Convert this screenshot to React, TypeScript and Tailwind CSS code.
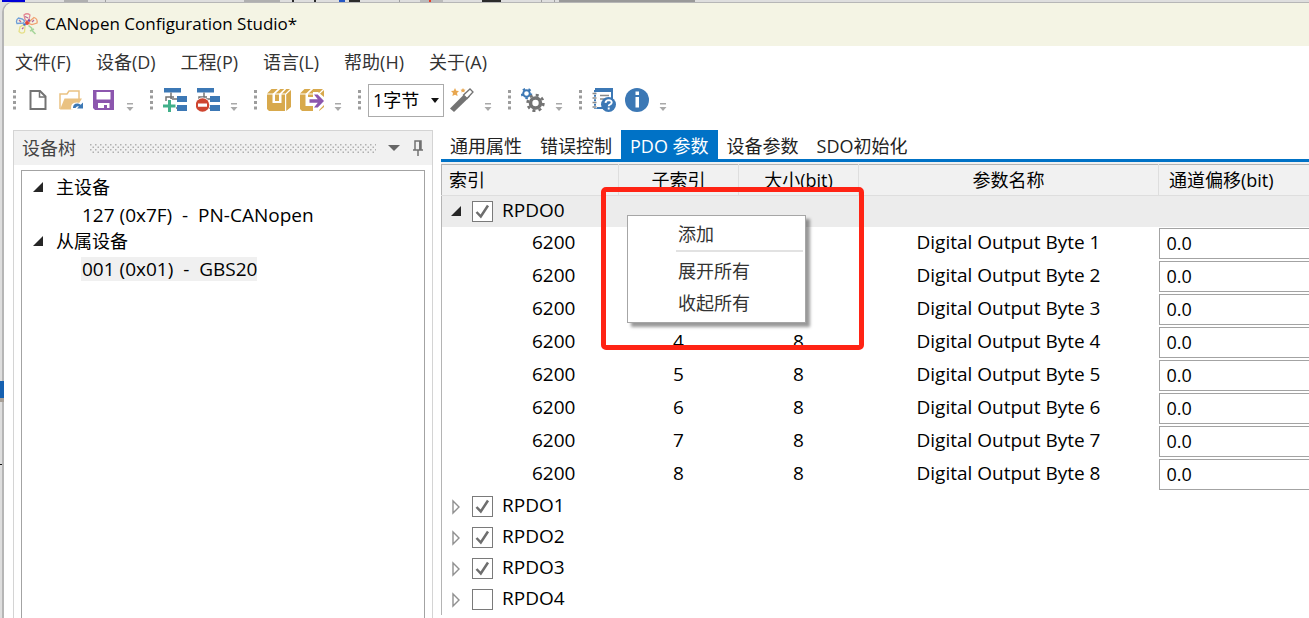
import { ReactNode, useState } from "react";

const menus = ["文件(F)", "设备(D)", "工程(P)", "语言(L)", "帮助(H)", "关于(A)"];

const tabs = ["通用属性", "错误控制", "PDO 参数", "设备参数", "SDO初始化"];

const mappings = [1, 2, 3, 4, 5, 6, 7, 8].map((n) => ({
    index: "6200",
    sub: n,
    size: 8,
    name: `Digital Output Byte ${n}`,
    offset: "0.0",
}));

const collapsedPdos = [
    { name: "RPDO1", enabled: true },
    { name: "RPDO2", enabled: true },
    { name: "RPDO3", enabled: true },
    { name: "RPDO4", enabled: false },
];

/* ---------- icons ---------- */

const AppLogo = () => (
    <svg className="w-6 h-6" viewBox="0 0 24 24" fill="none" strokeWidth="1.3">
        <path d="M10 7.500 9 3q3-2.500 6 0l-1 4.500-2 2z" stroke="#e58a94" />
        <path d="M8.500 11 2 11.500Q.5 8 3.500 6l4 1 2 2z" stroke="#6f9fd8" />
        <path d="M15 9l4-3.500q4 1.500 3 5.500l-5 1.500-3-1z" stroke="#f0a070" />
        <path d="M10 14.500 9.500 20q-3 2.500-5.500-.5L5 15l3-2z" stroke="#e6e08a" />
        <path d="M13.500 13.500l3 2.500 1 3 3 3M15 19l4-2" stroke="#a8d69c" strokeWidth="1.600" />
        <path d="M4 8l2 2M10 4.500l3 1.500M19 8l-2 2M7 17l1.500-1.500" stroke="#b5679a" />
        <circle cx="12" cy="11" r="2" fill="#e0453a" />
        <circle cx="9.500" cy="12.500" r="1.300" fill="#4775c9" />
        <circle cx="14" cy="8.500" r="1.200" fill="#7a4fb0" />
    </svg>
);

const NewIcon = () => (
    <svg className="w-6 h-6" viewBox="0 0 24 24" fill="none" stroke="#737373" strokeWidth="2">
        <path d="M4.500 3H14l5.500 5.500V21h-15z" />
        <path d="M13.500 3v6h6" strokeWidth="1.500" />
    </svg>
);

const OpenIcon = () => (
    <svg className="w-6 h-6" viewBox="0 0 24 24">
        <path d="M1 21V6h7l2-3h10v8" fill="none" stroke="#eac282" strokeWidth="1.500" />
        <path d="M1 21.500 5.500 10.500H23l-2.500 4-7 7z" fill="#eac282" />
        <path d="M12 21.500q-1-9 9.500-6.500L24 13v9h-6l2.500-3q-3.500-1.500-4.500 2.500z" fill="#fff" />
        <path d="M14 20q0-5 5-4.500 1.500.2 2.700 1.200L24 14.500v6h-6l2-2q-2-1.200-3.500 1.500z" fill="#3c78b5" />
    </svg>
);

const SaveIcon = () => (
    <svg className="w-6 h-6" viewBox="0 0 24 24">
        <path d="M1 2h21v20H3l-2-2z" fill="#8c56ae" />
        <path d="M4.500 4h14v7.500h-14zM6 15h11.500v5H15v-3h-3v3H6z" fill="#fff" />
    </svg>
);

const TreeNodes = () => (
    <>
        <path d="M1 0h17v4.500H1zM14 8h10v6H14zM14 17h10v6H14z" fill="#3c78b5" />
        <path d="M8 4.500V9M3 13V9h8M8 9v11h6M8 11h6" fill="none" stroke="#737373" strokeWidth="1.500" />
    </>
);

const AddNodeIcon = () => (
    <svg className="w-6 h-6" viewBox="0 0 24 24">
        <TreeNodes />
        <path d="M4 11h5v4h4v6H9v3H4v-3H0v-6h4z" fill="#fff" />
        <path d="M5 12h3v4.500h4.500v3H8V24H5v-4.500H0v-3h5z" fill="#42b08a" />
    </svg>
);

const RemoveNodeIcon = () => (
    <svg className="w-6 h-6" viewBox="0 0 24 24">
        <TreeNodes />
        <circle cx="6.500" cy="17" r="7.500" fill="#fff" />
        <circle cx="6.500" cy="17" r="6.800" fill="#cf4530" />
        <path d="M2 15.500h9v3.200H2z" fill="#fff" />
    </svg>
);

const BoxShape = () => (
    <>
        <path d="M4.500 1H23l-4.500 4.500H0z" fill="#d8a94c" />
        <path d="M0 6.500h18V23H2l-2-2zM19.200 6.500 24 2v17l-4.800 4z" fill="#d8a94c" />
    </>
);

const BoxIcon = () => (
    <svg className="w-6 h-6" viewBox="0 0 24 24">
        <BoxShape />
        <path d="M5.500 6 11 .8h2.500L8 6v7h4V6L17.500.8h2L14.500 6v9h-9z" fill="#fff" />
    </svg>
);

const ExportIcon = () => (
    <svg className="w-6 h-6" viewBox="0 0 24 24">
        <BoxShape />
        <path d="M5.500 6 11 .8h2.500L8 6v3h5V4h5l6 5v8l-6 6h-5v-5H5.500z" fill="#fff" />
        <path d="M9.500 11.300h8.300L14 6.500h3.700L24 13l-6.300 6.500H14l3.800-4.700H9.500z" fill="#8c56ae" />
    </svg>
);

const WandIcon = () => (
    <svg className="w-6 h-6" viewBox="0 0 24 24">
        <path d="M0 20.500 16 4.500 20 8.500 4 24z" fill="#737373" />
        <path d="M13.500 7 20 1l3 3-6 6.500z" fill="#fff" stroke="#737373" strokeWidth="1.300" />
        <path d="M5 0l1.300 2.700L9 3 7 5l.6 3L5 6.700 2.400 8 3 5 1 3l2.700-.3zM13 0l.8 1.500 1.700.2-1.200 1.200.3 1.700-1.600-.8-1.600.8.3-1.700-1.200-1.200 1.700-.2z" fill="#e8a750" />
    </svg>
);

const GearsIcon = () => (
    <svg className="w-6 h-6" viewBox="0 0 24 24" fill="none">
        <circle cx="5.500" cy="5.500" r="3.300" stroke="#3c78b5" strokeWidth="2" />
        <circle cx="5.500" cy="5.500" r="4.700" stroke="#3c78b5" strokeWidth="2" strokeDasharray="2.400 3.500" />
        <circle cx="14.500" cy="15" r="8.500" fill="#fff" />
        <circle cx="14.500" cy="15" r="5" stroke="#737373" strokeWidth="3.600" />
        <circle cx="14.500" cy="15" r="7.900" stroke="#737373" strokeWidth="2.600" strokeDasharray="3 3.200" />
    </svg>
);

const HelpBookIcon = () => (
    <svg className="w-6 h-6" viewBox="0 0 24 24" fill="none">
        <path d="M3 1.500h17V11M3 2v18h8" stroke="#3c78b5" strokeWidth="2" />
        <path d="M3 0h18v4H3z" fill="#3c78b5" />
        <path d="M1 5.500h4M1 10h4M1 14.500h4M1 19h4" stroke="#fff" strokeWidth="2.500" />
        <path d="M.5 5.500h4M.5 10h4M.5 14.500h4M.5 19h4M8 7.500h9M8 11h6" stroke="#8a8a8a" strokeWidth="1.300" />
        <circle cx="16.500" cy="16.500" r="7.500" fill="#3c78b5" />
        <path d="M13.500 14.800q.3-2.700 3.200-2.700 3 .1 3 2.300 0 1.500-1.800 2.200-1.200.5-1.200 1.600M16.700 19.500v2" stroke="#fff" strokeWidth="1.900" />
    </svg>
);

const InfoIcon = () => (
    <svg className="w-6 h-6" viewBox="0 0 24 24">
        <circle cx="12" cy="12" r="12" fill="#3c78b5" />
        <path d="M10.500 3.500h3.500v3.500h-3.500zM10.500 9h3.500v10.500h-3.500z" fill="#fff" />
    </svg>
);

const Grip = () => (
    <svg className="w-[3px] h-5" viewBox="0 0 3 20" fill="#9d9d9d">
        <path d="M0 0h3v3H0zM0 5.500h3v3H0zM0 11h3v3H0zM0 16.500h3v3H0z" />
    </svg>
);

const Overflow = () => (
    <button aria-label="更多" className="w-2 h-6 pt-[14px]">
        <svg className="w-2 h-2" viewBox="0 0 8 8" fill="#a9a9a9">
            <path d="M1 0h6v1.500H1zM.5 4h7L4 8z" />
        </svg>
    </button>
);

const Expander = ({ open }: { open: boolean }) =>
    open ? (
        <svg className="w-3 h-3" viewBox="0 0 12 12">
            <path d="M11 0v10H1z" fill="#262626" />
        </svg>
    ) : (
        <svg className="w-3 h-4" viewBox="0 0 12 16">
            <path d="M3 2v12L9 8z" fill="none" stroke="#909090" strokeWidth="1.400" />
        </svg>
    );

/* ---------- pieces ---------- */

const ToolGroup = ({ icons }: { icons: { label: string; icon: ReactNode }[] }) => (
    <div className="flex items-center gap-[10px]">
        <Grip />
        <div className="flex items-center gap-[9px]">
            {icons.map((item) => (
                <button key={item.label} aria-label={item.label} className="w-6 h-6">
                    {item.icon}
                </button>
            ))}
        </div>
        <Overflow />
    </div>
);

const PdoRow = ({ name, enabled, open }: { name: string; enabled: boolean; open: boolean }) => (
    <div className="flex items-center h-[31px] pl-2">
        <button aria-label={open ? "收起" : "展开"} className="w-3 mr-[10px]">
            <Expander open={open} />
        </button>
        <label className="flex items-center gap-[9px]">
            <span className="relative w-[21px] h-[21px]">
                <input
                    type="checkbox"
                    defaultChecked={enabled}
                    className="peer block appearance-none w-[21px] h-[21px] bg-white border border-[#7a7a7a]"
                />
                <svg
                    className="hidden peer-checked:block absolute inset-0 pointer-events-none"
                    viewBox="0 0 21 21"
                    fill="none"
                    stroke="#6e6e6e"
                    strokeWidth="2.500"
                >
                    <path d="M4.500 11l4.300 4.500L16 4.500" />
                </svg>
            </span>
            <span className="pb-1">{name}</span>
        </label>
    </div>
);

const DeviceTree = () => (
    <aside className="flex flex-col w-[420px] shrink-0 border-x border-t border-[#d4d4d4]">
        <div className="flex items-center h-[34px] px-2 bg-[#f1f1f1] text-[#444]">
            <h2>设备树</h2>
            <svg className="flex-1 h-[9px] ml-[14px] mr-3">
                <defs>
                    <pattern id="dots" width="5" height="5" patternUnits="userSpaceOnUse">
                        <rect width="1.500" height="1.500" fill="#b0b0b0" />
                        <rect x="2.500" y="2.500" width="1.500" height="1.500" fill="#b0b0b0" />
                    </pattern>
                </defs>
                <rect width="100%" height="100%" fill="url(#dots)" />
            </svg>
            <button aria-label="窗口位置" className="mr-3">
                <svg className="w-3 h-[6px]" viewBox="0 0 12 6">
                    <path d="M0 0h12L6 6z" fill="#666" />
                </svg>
            </button>
            <button aria-label="自动隐藏">
                <svg className="w-3 h-4" viewBox="0 0 12 16" fill="none" stroke="#707070" strokeWidth="1.500">
                    <path d="M3 10V1h6v9M1 10h10M6 10v6M7.800 1v9" />
                </svg>
            </button>
        </div>
        <ul className="flex-1 mt-[5px] mx-[7px] pt-[3px] pl-[10px] border-x border-t border-[#a3a3a3] leading-[27px]">
            <li>
                <div className="flex items-center gap-3">
                    <Expander open />
                    主设备
                </div>
                <div className="flex items-center h-[27px] pl-[49px]">
                    <span className="pl-px text-[19px] leading-6 whitespace-pre">127 (0x7F)  -  PN-CANopen</span>
                </div>
            </li>
            <li>
                <div className="flex items-center gap-3">
                    <Expander open />
                    从属设备
                </div>
                <div className="flex items-center h-[27px] pl-[49px]">
                    <span className="pl-px bg-[#f0f0f0] text-[19px] leading-6 whitespace-pre">001 (0x01)  -  GBS20</span>
                </div>
            </li>
        </ul>
    </aside>
);

const ContextMenu = () => (
    <div
        role="menu"
        className="absolute left-[186px] top-[85px] w-[179px] pt-0.5 pb-[3px] bg-white border border-[#a6a6a6] shadow-[4px_4px_3px_rgba(0,0,0,0.4)] text-[#333]"
    >
        <button role="menuitem" className="block w-full h-8 pl-[50px] text-left">
            添加
        </button>
        <div className="h-0.5 ml-12 mr-0.5 mb-[3px] bg-[#e2e2e2]" />
        <button role="menuitem" className="block w-full h-8 pl-[50px] text-left">
            展开所有
        </button>
        <button role="menuitem" className="block w-full h-8 pl-[50px] text-left">
            收起所有
        </button>
    </div>
);

const PdoTable = () => (
    <table className="w-full table-fixed border-collapse border-t border-l border-[#b4b4b4]">
        <colgroup>
            <col className="w-[177px]" />
            <col className="w-[120px]" />
            <col className="w-[120px]" />
            <col className="w-[300px]" />
            <col />
        </colgroup>
        <thead>
            <tr className="h-[31px] bg-[#f1f1f1] border-b border-[#dedede]">
                <th className="pl-[7px] font-normal text-left border-r border-[#dedede]">索引</th>
                <th className="font-normal border-r border-[#dedede]">子索引</th>
                <th className="font-normal border-r border-[#dedede]">大小(bit)</th>
                <th className="font-normal border-r border-[#dedede]">参数名称</th>
                <th className="pl-[10px] font-normal text-left">通道偏移(bit)</th>
            </tr>
        </thead>
        <tbody className="text-[19px]">
            <tr className="bg-[#ececec]">
                <td colSpan={5}>
                    <PdoRow name="RPDO0" enabled open />
                </td>
            </tr>
            {mappings.map((row) => (
                <tr key={row.sub} className="h-[33px]">
                    <td className="pl-[90px] pb-[3px]">{row.index}</td>
                    <td className="pb-[3px] text-center">{row.sub}</td>
                    <td className="pb-[3px] text-center">{row.size}</td>
                    <td className="pb-[3px] text-center">{row.name}</td>
                    <td>
                        <input
                            aria-label={`${row.name} 通道偏移`}
                            defaultValue={row.offset}
                            className="block w-full h-[31px] pl-[7px] pb-0.5 bg-white border border-r-0 border-[#a3a3a3] outline-none text-[18px]"
                        />
                    </td>
                </tr>
            ))}
            {collapsedPdos.map((pdo) => (
                <tr key={pdo.name}>
                    <td colSpan={5}>
                        <PdoRow name={pdo.name} enabled={pdo.enabled} open={false} />
                    </td>
                </tr>
            ))}
        </tbody>
    </table>
);

const App = () => {
    const [activeTab, setActiveTab] = useState("PDO 参数");

    return (
        <div className="relative h-screen overflow-hidden pt-0.5 pl-0.5 bg-[#dedede] font-['Open_Sans','Noto_Sans_CJK_SC',sans-serif] text-[18px] leading-6 text-black">
            {/* Slivers of the windows behind */}
            <svg className="absolute left-0 top-0 w-full h-0.5">
                <path d="M2 0h23v2H2z" fill="#0000d8" />
                <path d="M64 0h24v2H64zM244 0h36v2h-36z" fill="#b0b0b0" />
                <path d="M105 0h1v2h-1zM399 0h1v2h-1zM541 0h1v2h-1zM554 0h1v2h-1z" fill="#a0a0a0" />
                <path d="M292 0h2v2h-2zM314 0h2v2h-2zM349 0h11v2h-11zM482 0h19v2h-19z" fill="#2b2b2b" />
                <path d="M339 0h6v2h-6z" fill="#2457c5" />
                <path d="M420 0h23v2h-23z" fill="#bbb" />
                <path d="M429 0h2v2h-2z" fill="#e8402a" />
                <path d="M559 0h136v2H559z" fill="#999" />
            </svg>
            <svg className="absolute left-0 top-0 w-1 h-full">
                <path d="M0 381h4v17H0z" fill="#1560b0" />
                <path d="M0 398h4v4H0z" fill="#a8a098" />
                <path d="M0 464h2v1H0z" fill="#111" />
            </svg>

            <div className="flex flex-col h-full bg-white border-l-2 border-t border-[#b6b6b6] rounded-tl-[10px] overflow-hidden">
                <header className="flex items-center gap-[6px] h-[43px] shrink-0 pl-[11px] pb-0.5 bg-[#f4f4e4]">
                    <AppLogo />
                    <h1 className="text-[17px]">CANopen Configuration Studio*</h1>
                </header>

                <nav className="flex items-center gap-[25px] h-8 shrink-0 pl-[11px] text-[#333]">
                    {menus.map((menu) => (
                        <button key={menu}>{menu}</button>
                    ))}
                </nav>

                <div className="flex items-center gap-4 h-11 shrink-0 pl-[9px]">
                    <ToolGroup
                        icons={[
                            { label: "新建", icon: <NewIcon /> },
                            { label: "打开", icon: <OpenIcon /> },
                            { label: "保存", icon: <SaveIcon /> },
                        ]}
                    />
                    <ToolGroup
                        icons={[
                            { label: "添加设备", icon: <AddNodeIcon /> },
                            { label: "删除设备", icon: <RemoveNodeIcon /> },
                        ]}
                    />
                    <ToolGroup
                        icons={[
                            { label: "打包", icon: <BoxIcon /> },
                            { label: "导出", icon: <ExportIcon /> },
                        ]}
                    />
                    <div className="flex items-center">
                        <Grip />
                        <div className="relative ml-[7px] mr-[6px]">
                            <select
                                aria-label="字节数"
                                className="block appearance-none w-[76px] h-[33px] pl-1 bg-white border border-[#ababab]"
                            >
                                <option>1字节</option>
                                <option>2字节</option>
                            </select>
                            <svg className="absolute right-[5px] top-[14px] w-2 h-[5px] pointer-events-none" viewBox="0 0 8 5">
                                <path d="M0 0h8L4 5z" fill="#111" />
                            </svg>
                        </div>
                        <button aria-label="自动映射" className="w-6 h-6 mr-[10px]">
                            <WandIcon />
                        </button>
                        <Overflow />
                    </div>
                    <ToolGroup icons={[{ label: "设置", icon: <GearsIcon /> }]} />
                    <ToolGroup
                        icons={[
                            { label: "帮助", icon: <HelpBookIcon /> },
                            { label: "关于", icon: <InfoIcon /> },
                        ]}
                    />
                </div>

                <main className="flex flex-1 min-h-0 gap-2 pt-2 pl-[9px]">
                    <DeviceTree />
                    <section className="relative flex-1 min-w-0">
                        <div role="tablist" className="flex h-8 border-b-[3px] border-[#0072c6] text-[#222]">
                            {tabs.map((tab) => (
                                <button
                                    key={tab}
                                    role="tab"
                                    aria-selected={tab === activeTab}
                                    onClick={() => setActiveTab(tab)}
                                    className={
                                        tab === activeTab
                                            ? "px-[9px] pt-0.5 bg-[#0072c6] text-white"
                                            : "px-[9px] pt-0.5"
                                    }
                                >
                                    {tab}
                                </button>
                            ))}
                        </div>
                        <div className="pt-0.5 bg-[#f1f1f1]">
                            <div className="bg-white">
                                <PdoTable />
                            </div>
                        </div>
                        <ContextMenu />
                        {/* Highlight frame around the menu */}
                        <div className="absolute left-[160px] top-[57px] w-[263px] h-[163px] border-[5px] border-[#ff2314] rounded-[5px] pointer-events-none" />
                    </section>
                </main>
            </div>
        </div>
    );
};

export default App;
